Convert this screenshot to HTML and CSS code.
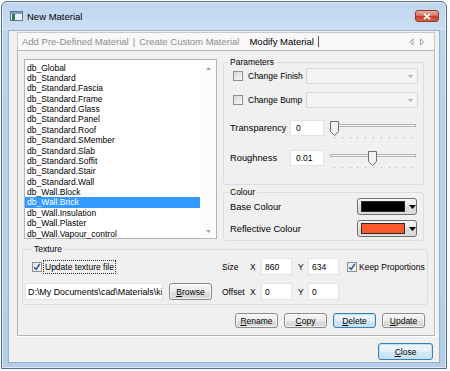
FILE: index.html
```html
<!DOCTYPE html>
<html>
    <head>
        <title>New Material</title>
        <link rel="stylesheet" href="styles.css">
    </head>
    <body>
        <div class="window">
            <div class="titlebar">
                <svg class="app-icon" width="13" height="10" viewBox="0 0 13 10">
                    <rect x="0.5" y="0.5" width="12" height="9" fill="#eef2f6" stroke="#5a7897"/>
                    <rect x="1" y="1" width="11" height="2" fill="#7da0c8"/>
                    <rect x="2" y="3" width="3" height="6" fill="#2f7d4e"/>
                </svg>
                <span class="title">New Material</span>
                <div class="close-btn">
                    <svg width="10" height="7" viewBox="0 0 10 7">
                        <path d="M2 0.8 L8 6.2 M8 0.8 L2 6.2" stroke="#fff" stroke-width="1.7"/>
                    </svg>
                </div>
            </div>

            <div class="client">
                <div class="tabs">
                    <span class="tab">Add Pre-Defined Material</span>
                    <span class="tab-sep">|</span>
                    <span class="tab">Create Custom Material</span>
                    <span class="tab active">Modify Material</span>
                    <span class="caret"></span>
                    <svg class="tab-arrows" width="16" height="8" viewBox="0 0 16 8">
                        <path d="M4 1 L0.8 4 L4 7 Z" fill="none" stroke="#a0a0a0"/>
                        <path d="M11.5 1 L14.7 4 L11.5 7 Z" fill="none" stroke="#a0a0a0"/>
                    </svg>
                </div>

                <div class="tabpanel">
                    <div class="top-row">
                        <div class="listbox">
                            <ul class="items">
                                <li>db_Global</li>
                                <li>db_Standard</li>
                                <li>db_Standard.Fascia</li>
                                <li>db_Standard.Frame</li>
                                <li>db_Standard.Glass</li>
                                <li>db_Standard.Panel</li>
                                <li>db_Standard.Roof</li>
                                <li>db_Standard.SMember</li>
                                <li>db_Standard.Slab</li>
                                <li>db_Standard.Soffit</li>
                                <li>db_Standard.Stair</li>
                                <li>db_Standard.Wall</li>
                                <li>db_Wall.Block</li>
                                <li class="sel">db_Wall.Brick</li>
                                <li>db_Wall.Insulation</li>
                                <li>db_Wall.Plaster</li>
                                <li>db_Wall.Vapour_control</li>
                            </ul>
                            <div class="vscroll">
                                <svg width="5" height="3" viewBox="0 0 5 3"><path d="M0 3 L2.5 0 L5 3 Z" fill="#a8a8a8"/></svg>
                                <svg width="5" height="3" viewBox="0 0 5 3"><path d="M0 0 L2.5 3 L5 0 Z" fill="#a8a8a8"/></svg>
                            </div>
                        </div>

                        <div class="side">
                            <fieldset class="group params">
                                <legend>Parameters</legend>
                                <div class="prow check-row">
                                    <span class="box"></span>
                                    <span>Change Finish</span>
                                    <div class="combo">
                                        <svg width="5" height="3" viewBox="0 0 5 3"><path d="M0 0 L2.5 3 L5 0 Z" fill="#b0b0b0"/></svg>
                                    </div>
                                </div>
                                <div class="prow check-row">
                                    <span class="box"></span>
                                    <span>Change Bump</span>
                                    <div class="combo">
                                        <svg width="5" height="3" viewBox="0 0 5 3"><path d="M0 0 L2.5 3 L5 0 Z" fill="#b0b0b0"/></svg>
                                    </div>
                                </div>
                                <div class="prow srow">
                                    <span class="big-label">Transparency</span>
                                    <div class="field small">0</div>
                                    <svg class="slider" width="90" height="24" viewBox="0 0 90 24">
                                        <rect x="2.5" y="8.5" width="85" height="2" fill="#f6f6f6" stroke="#b4b4b4"/>
                                        <g fill="#b0b0b0">
                                            <rect x="6" y="21" width="1" height="1.5"/>
                                            <rect x="14" y="21" width="1" height="1.5"/>
                                            <rect x="22" y="21" width="1" height="1.5"/>
                                            <rect x="29" y="21" width="1" height="1.5"/>
                                            <rect x="37" y="21" width="1" height="1.5"/>
                                            <rect x="45" y="21" width="1" height="1.5"/>
                                            <rect x="53" y="21" width="1" height="1.5"/>
                                            <rect x="61" y="21" width="1" height="1.5"/>
                                            <rect x="68" y="21" width="1" height="1.5"/>
                                            <rect x="76" y="21" width="1" height="1.5"/>
                                            <rect x="84" y="21" width="1" height="1.5"/>
                                        </g>
                                        <path d="M2.5 5.5 H10.5 V15.5 L6.5 19.5 L2.5 15.5 Z" fill="#f2f2f2" stroke="#6f6f6f"/>
                                    </svg>
                                </div>
                                <div class="prow srow">
                                    <span class="big-label">Roughness</span>
                                    <div class="field small">0.01</div>
                                    <svg class="slider" width="90" height="24" viewBox="0 0 90 24">
                                        <rect x="2.5" y="8.5" width="85" height="2" fill="#f6f6f6" stroke="#b4b4b4"/>
                                        <g fill="#b0b0b0">
                                            <rect x="6" y="21" width="1" height="1.5"/>
                                            <rect x="14" y="21" width="1" height="1.5"/>
                                            <rect x="22" y="21" width="1" height="1.5"/>
                                            <rect x="29" y="21" width="1" height="1.5"/>
                                            <rect x="37" y="21" width="1" height="1.5"/>
                                            <rect x="45" y="21" width="1" height="1.5"/>
                                            <rect x="53" y="21" width="1" height="1.5"/>
                                            <rect x="61" y="21" width="1" height="1.5"/>
                                            <rect x="68" y="21" width="1" height="1.5"/>
                                            <rect x="76" y="21" width="1" height="1.5"/>
                                            <rect x="84" y="21" width="1" height="1.5"/>
                                        </g>
                                        <path d="M40.5 5.5 H48.5 V15.5 L44.5 19.5 L40.5 15.5 Z" fill="#f2f2f2" stroke="#6f6f6f"/>
                                    </svg>
                                </div>
                            </fieldset>

                            <fieldset class="group colours">
                                <legend>Colour</legend>
                                <div class="prow crow">
                                    <span class="big-label">Base Colour</span>
                                    <div class="swatch-btn">
                                        <span class="swatch black"></span>
                                        <svg width="7" height="4" viewBox="0 0 7 4"><path d="M0 0 L3.5 4 L7 0 Z" fill="#000"/></svg>
                                    </div>
                                </div>
                                <div class="prow crow">
                                    <span class="big-label">Reflective Colour</span>
                                    <div class="swatch-btn">
                                        <span class="swatch orange"></span>
                                        <svg width="7" height="4" viewBox="0 0 7 4"><path d="M0 0 L3.5 4 L7 0 Z" fill="#000"/></svg>
                                    </div>
                                </div>
                            </fieldset>
                        </div>
                    </div>

                    <fieldset class="group texture">
                        <legend>Texture</legend>
                        <div class="tex-body">
                            <div class="tex-left">
                                <div class="prow trow">
                                    <span class="box on">
                                        <svg width="8" height="8" viewBox="0 0 8 8"><path d="M1.2 4.2 L3.2 6.4 L6.8 1" fill="none" stroke="#2a56a0" stroke-width="1.5"/></svg>
                                    </span>
                                    <span class="focus-label">Update texture file</span>
                                </div>
                                <div class="prow trow">
                                    <div class="field path">D:\My Documents\cad\Materials\ki</div>
                                    <button class="btn browse"><span><u>B</u>rowse</span></button>
                                </div>
                            </div>
                            <div class="tex-right">
                                <div class="prow trow">
                                    <span class="lbl">Size</span>
                                    <span class="axis">X</span>
                                    <div class="field num">860</div>
                                    <span class="axis y">Y</span>
                                    <div class="field num">634</div>
                                    <span class="box on keep">
                                        <svg width="8" height="8" viewBox="0 0 8 8"><path d="M1.2 4.2 L3.2 6.4 L6.8 1" fill="none" stroke="#2a56a0" stroke-width="1.5"/></svg>
                                    </span>
                                    <span class="keep-label">Keep Proportions</span>
                                </div>
                                <div class="prow trow">
                                    <span class="lbl">Offset</span>
                                    <span class="axis">X</span>
                                    <div class="field num">0</div>
                                    <span class="axis y">Y</span>
                                    <div class="field num">0</div>
                                </div>
                            </div>
                        </div>
                    </fieldset>

                    <div class="actions">
                        <button class="btn"><span><u>R</u>ename</span></button>
                        <button class="btn"><span><u>C</u>opy</span></button>
                        <button class="btn focus"><span><u>D</u>elete</span></button>
                        <button class="btn"><span><u>U</u>pdate</span></button>
                    </div>
                </div>

                <div class="footer">
                    <button class="btn focus close"><span><u>C</u>lose</span></button>
                </div>
            </div>
        </div>
    </body>
</html>
```

FILE: styles.css
```css
* {
    box-sizing: border-box;
}
body {
    margin: 0;
    background: #fff;
    font-family: "Liberation Sans", Arial, sans-serif;
    font-size: 8.5px;
    color: #000;
}
.window {
    width: 446px;
    height: 368px;
    margin: 1px 0 0 1px;
    border: 1px solid #536e8d;
    border-radius: 6px 6px 0 0;
    background: linear-gradient(#bed5ee, #cbdef3 28px, #bbd3ec 29px, #b4cee9);
    box-shadow: inset 0 0 0 1px rgba(255, 255, 255, 0.55);
    padding: 0 6px 5px 6px;
    display: flex;
    flex-direction: column;
}
.titlebar {
    height: 28px;
    display: flex;
    align-items: center;
}
.app-icon {
    margin-left: 2px;
    margin-right: 4px;
}
.title {
    font-size: 9.5px;
}
.close-btn {
    margin-left: auto;
    margin-right: 1px;
    width: 24px;
    height: 12px;
    border: 1px solid #8a3b30;
    border-radius: 3px;
    background: linear-gradient(#eab0a6, #d8735f 45%, #c5402b 55%, #d5624b);
    display: flex;
    align-items: center;
    justify-content: center;
}
.client {
    flex: 1;
    background: #f0f0f0;
    border: 1px solid #9cb0c6;
    padding: 1px 4px 0 8px;
    display: flex;
    flex-direction: column;
}

/* tab strip */
.tabs {
    height: 18px;
    border: 1px solid #cacaca;
    border-bottom: 0;
    background: #f8f8f8;
    display: flex;
    align-items: center;
    padding: 0 9px 0 4px;
    font-size: 9.5px;
    color: #8c8c8c;
    white-space: nowrap;
}
.tab-sep {
    margin: 0 4px;
}
.tab.active {
    color: #000;
    margin-left: 10px;
}
.caret {
    width: 1px;
    height: 11px;
    background: #555;
    margin-left: 4px;
}
.tab-arrows {
    margin-left: auto;
}
.tabpanel {
    height: 286px;
    border: 1px solid #b5b5b5;
    box-shadow: 1px 1px 0 #fff;
    background: #f0f0f0;
}

/* list + right column */
.top-row {
    display: flex;
    align-items: flex-start;
    margin: 6px 0 0 6px;
}
.listbox {
    width: 193px;
    height: 180px;
    margin-top: 2px;
    border: 1px solid #b1b5bc;
    background: #fff;
    display: flex;
}
.items {
    list-style: none;
    margin: 0;
    padding: 2.5px 0 0 0;
    width: 175px;
}
.items li {
    height: 10.375px;
    line-height: 10.375px;
    padding-left: 2px;
    white-space: nowrap;
}
.items li.sel {
    background: #3399ff;
    color: #fff;
}
.vscroll {
    width: 16px;
    display: flex;
    flex-direction: column;
    justify-content: space-between;
    align-items: center;
    padding: 7px 0 5px 0;
    background: #fcfcfc;
}
.side {
    width: 201px;
    margin-left: 6px;
}
.group {
    margin: 0;
    padding: 0;
    min-width: 0;
    border: 1px solid #d5dfe5;
    border-radius: 3px;
}
.group legend {
    padding: 0 2px;
    margin-left: 4px;
    font-size: 8.5px;
    line-height: 10px;
}
.prow {
    display: flex;
    align-items: center;
}
.params {
    padding: 1px 0 14px 0;
}
.check-row {
    height: 16px;
    padding-left: 9px;
}
.check-row + .check-row {
    margin-top: 8px;
}
.box {
    width: 10px;
    height: 10px;
    flex: none;
    border: 1px solid #8f8f8f;
    background: linear-gradient(135deg, #d8d8d8, #fbfbfb);
    margin-right: 5px;
    display: flex;
    align-items: center;
    justify-content: center;
}
.box.on {
    background: linear-gradient(135deg, #dfe6ee, #fbfbfb);
}
.combo {
    margin-left: auto;
    margin-right: 5px;
    width: 112px;
    height: 16px;
    border: 1px solid #d3d6da;
    border-radius: 2px;
    background: #f4f4f4;
    display: flex;
    align-items: center;
    justify-content: flex-end;
    padding-right: 4px;
}
.srow {
    height: 24px;
    padding-left: 6px;
    margin-top: 8px;
}
.srow + .srow {
    margin-top: 6px;
}
.big-label {
    font-size: 9.3px;
}
.srow .big-label {
    width: 60px;
}
.field {
    background: #fff;
    border: 1px solid #e0e4e9;
    height: 17px;
    padding-left: 3px;
    display: flex;
    align-items: center;
    white-space: nowrap;
    overflow: hidden;
}
.field.small {
    width: 34px;
    height: 16px;
    padding-left: 5px;
}
.slider {
    margin-left: 4px;
}
.colours {
    margin-top: 2px;
    padding: 1px 0 3px 0;
}
.crow {
    height: 17px;
    padding-left: 6px;
}
.crow + .crow {
    margin-top: 5px;
}
.swatch-btn {
    margin-left: auto;
    margin-right: 6px;
    width: 60px;
    height: 17px;
    border: 1px solid #707070;
    border-radius: 3px;
    background: linear-gradient(#f6f6f6, #e6e6e6 50%, #d8d8d8 51%, #dedede);
    display: flex;
    align-items: center;
    padding-left: 3px;
}
.swatch {
    width: 44px;
    height: 11px;
    border: 1px solid #2a2a2a;
    margin-right: 4px;
}
.swatch.black {
    background: #000;
}
.swatch.orange {
    background: #fa5a2b;
}

/* texture */
.texture {
    margin: 3px 0 0 4px;
    width: 406px;
    padding: 4px 0 4px 2px;
}
.texture legend {
    margin-left: 7px;
}
.tex-body {
    display: flex;
}
.tex-left {
    width: 187px;
}
.trow {
    height: 17px;
}
.trow + .trow {
    margin-top: 8px;
}
.tex-left .box {
    margin-left: 7px;
    margin-right: 2px;
}
.focus-label {
    outline: 1px dotted #333;
    padding: 1px 1px;
    line-height: 10px;
}
.field.path {
    width: 138px;
    padding-left: 2px;
    font-size: 8.9px;
}
.tex-right {
    margin-left: 10px;
}
.lbl {
    width: 28px;
}
.axis {
    width: 11px;
}
.axis.y {
    width: 10px;
    margin-left: 6px;
}
.field.num {
    width: 31px;
}
.box.keep {
    margin-left: 8px;
    margin-right: 2px;
}

/* buttons */
.btn {
    font-family: inherit;
    font-size: 8.5px;
    color: #000;
    padding: 0;
    width: 43px;
    height: 15px;
    border: 1px solid #8a8a8a;
    border-radius: 3px;
    background: linear-gradient(#f5f5f5, #ededed 50%, #e0e0e0 51%, #d4d4d4);
    box-shadow: inset 0 0 0 1px rgba(255, 255, 255, 0.7);
    display: flex;
    align-items: center;
    justify-content: center;
}
.btn.focus {
    border-color: #3c7fb1;
    background: linear-gradient(#eef6fc, #e4f0f9 50%, #d3e7f5 51%, #c8e0f2);
    box-shadow: inset 0 0 0 1px #bfe0f7;
}
.btn.browse {
    height: 17px;
    margin-left: 6px;
}
.actions {
    display: flex;
    justify-content: flex-end;
    gap: 6px;
    margin-top: 8px;
    padding-right: 9px;
}
.footer {
    display: flex;
    justify-content: flex-end;
    margin-top: 7px;
    padding-right: 2px;
}
.btn.close {
    width: 55px;
    height: 17px;
}
```
